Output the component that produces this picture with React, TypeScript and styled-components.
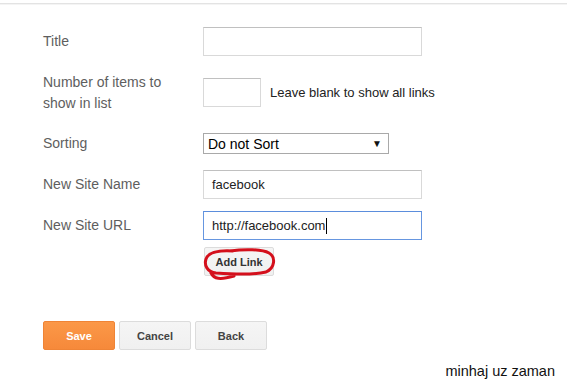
import styled, { createGlobalStyle } from 'styled-components';

const GlobalStyle = createGlobalStyle`
  html, body {
    margin: 0;
    padding: 0;
    background: #fff;
  }
  body {
    font-family: "Liberation Sans", Arial, sans-serif;
  }
`;

const Page = styled.div`
  width: 567px;
  height: 385px;
  padding-top: 3px;
  box-sizing: border-box;
  overflow: hidden;
`;

const Divider = styled.div`
  height: 1px;
  background: #e3e3e3;
  border-bottom: 1px solid #f4f4f4;
`;

const Form = styled.div`
  padding: 16px 0 0 43px;
`;

const Row = styled.div<{ $tall?: boolean }>`
  display: flex;
  align-items: center;
  min-height: ${(p) => (p.$tall ? '61px' : '41px')};
`;

const Label = styled.div`
  width: 160px;
  flex: none;
  font-size: 14px;
  line-height: 21px;
  color: #5e5e5e;
`;

const TextInput = styled.div<{ $width?: number; $focused?: boolean }>`
  width: ${(p) => p.$width ?? 219}px;
  height: 29px;
  box-sizing: border-box;
  display: flex;
  align-items: center;
  padding: 0 8px;
  font-size: 13px;
  color: #222;
  background: #fff;
  border: 1px solid ${(p) => (p.$focused ? '#6696e0' : '#d9d9d9')};
  border-top-color: ${(p) => (p.$focused ? '#5b8ddc' : '#c0c0c0')};
`;

const Caret = styled.span`
  display: inline-block;
  width: 1px;
  height: 16px;
  background: #000;
  margin-left: 1px;
`;

const Hint = styled.span`
  margin-left: 9px;
  font-size: 13px;
  color: #222;
`;

const SelectBox = styled.div`
  width: 186px;
  height: 21px;
  box-sizing: border-box;
  display: flex;
  align-items: center;
  justify-content: space-between;
  padding: 0 6px 0 4px;
  border: 1px solid #a9a9a9;
  font-size: 14px;
  color: #000;
  background: #fff;
`;

const Arrow = styled.span`
  font-size: 10px;
  color: #111;
`;

const ActionRow = styled.div`
  padding: 1px 0 0 161px;
`;

const Mark = styled.div`
  position: relative;
  display: inline-block;
`;

const Scribble = styled.svg`
  position: absolute;
  left: -4px;
  top: -1px;
  pointer-events: none;
`;

const Button = styled.button<{ $primary?: boolean }>`
  min-width: 72px;
  height: 29px;
  padding: 0 8px;
  box-sizing: border-box;
  font-family: "Liberation Sans", Arial, sans-serif;
  font-size: 11px;
  font-weight: bold;
  border-radius: 2px;
  cursor: pointer;
  color: ${(p) => (p.$primary ? '#fff' : '#444')};
  background: ${(p) =>
    p.$primary
      ? 'linear-gradient(#fb9848, #f6893a)'
      : 'linear-gradient(#f5f5f5, #f0f0f0)'};
  border: 1px solid ${(p) => (p.$primary ? '#ef8436' : '#dcdcdc')};
`;

const AddLinkButton = styled(Button)`
  min-width: 70px;
  color: #333;
`;

const ButtonBar = styled.div`
  display: flex;
  gap: 4px;
  margin-top: 45px;
`;

const Signature = styled.div`
  text-align: right;
  padding-right: 12px;
  margin-top: 13px;
  font-size: 14.5px;
  line-height: 16px;
  color: #111;
`;

export default function App() {
  return (
    <Page>
      <GlobalStyle />
      <Divider />
      <Form>
        <Row>
          <Label>Title</Label>
          <TextInput />
        </Row>
        <Row $tall>
          <Label>
            Number of items to
            <br />
            show in list
          </Label>
          <TextInput $width={58} />
          <Hint>Leave blank to show all links</Hint>
        </Row>
        <Row>
          <Label>Sorting</Label>
          <SelectBox>
            <span>Do not Sort</span>
            <Arrow>▼</Arrow>
          </SelectBox>
        </Row>
        <Row>
          <Label>New Site Name</Label>
          <TextInput>facebook</TextInput>
        </Row>
        <Row>
          <Label>New Site URL</Label>
          <TextInput $focused>
            http://facebook.com
            <Caret />
          </TextInput>
        </Row>
        <ActionRow>
          <Mark>
            <AddLinkButton>Add Link</AddLinkButton>
            <Scribble width="80" height="40" viewBox="0 0 80 40">
              <path
                d="M30 5 C44 3 62 3 69 7 C76 11 75 22 66 26 C54 29 30 28 16 27 C7 26 4 19 6 13 C8 7 17 4 33 5 M11 27 C14 33 20 34 34 30"
                fill="none"
                stroke="#d4101c"
                strokeWidth="3"
                strokeLinecap="round"
              />
            </Scribble>
          </Mark>
        </ActionRow>
        <ButtonBar>
          <Button $primary>Save</Button>
          <Button>Cancel</Button>
          <Button>Back</Button>
        </ButtonBar>
      </Form>
      <Signature>minhaj uz zaman</Signature>
    </Page>
  );
}
